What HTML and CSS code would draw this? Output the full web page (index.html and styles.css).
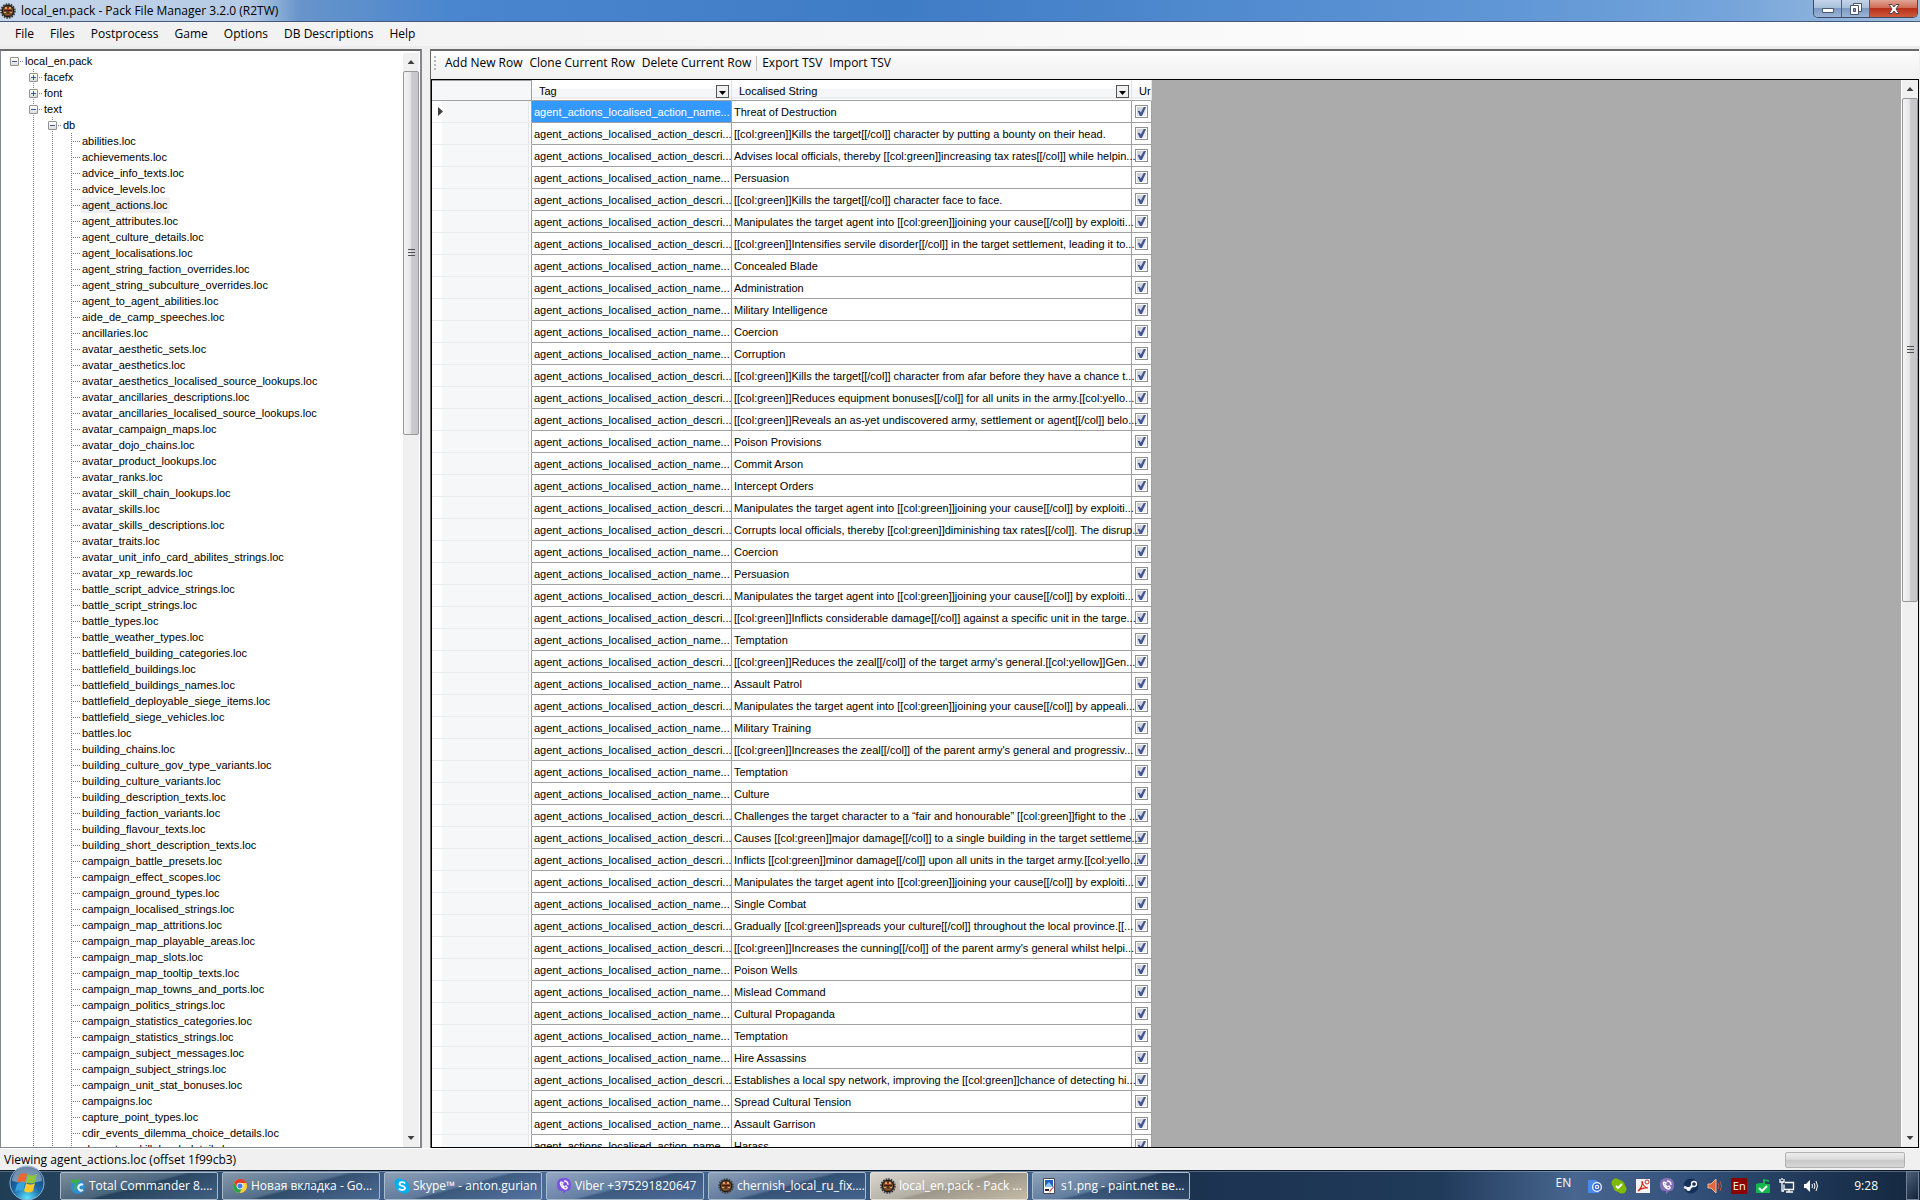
FILE: index.html
```html
<!DOCTYPE html>
<html lang="en">
<head>
<meta charset="utf-8">
<title>local_en.pack - Pack File Manager 3.2.0 (R2TW)</title>
<link rel="stylesheet" href="styles.css">
</head>
<body>
<svg class="defs" aria-hidden="true">
  <symbol id="beetle" viewBox="0 0 16 16">
    <circle cx="8" cy="8" r="6.500" fill="#5a4632" stroke="#3b3f45" stroke-width="2.500" stroke-dasharray="1.600 .900"/>
    <circle cx="8" cy="8" r="5.600" fill="#7d4f2a" stroke="#1e1712"/>
    <path d="M5 4h2v2H5zM9 4h2v2H9zM4 9h2v1H4zM10 9h2v1h-2zM7 11h2v1H7z" fill="#d8a468"/>
    <path d="M8 3v10M4 7.500h8" stroke="#3a1c10"/>
    <path d="M7 5h2v2H7z" fill="#c2301c"/>
  </symbol>
  <symbol id="viber" viewBox="0 0 16 16">
    <path d="M8 0c5 0 7 2 7 7s-2 6-5 6l-3 3v-3c-4 0-6-1-6-6s2-7 7-7z" fill="currentColor"/>
    <path d="M5 4c-2 1 1 7 5 7 2-1 1-2 0-3L8 9 6 6l1-1-2-1zM8 3c3 0 4 2 4 4" fill="none" stroke="#fff" stroke-width="1.3"/>
  </symbol>
</svg>

<header class="titlebar">
  <svg class="icon16"><use href="#beetle"/></svg>
  <h1>local_en.pack - Pack File Manager 3.2.0 (R2TW)</h1>
  <div class="window-buttons">
    <button class="win-min" aria-label="Minimize"><svg width="14" height="12" viewBox="0 0 14 12"><path d="M1.500 5.500h11v4h-11z" fill="#fff" stroke="#4a5568"/></svg></button>
    <button class="win-max" aria-label="Restore"><svg width="14" height="12" viewBox="0 0 14 12"><path d="M4.500.500h8v8h-8z" fill="#fff" stroke="#4a5568"/><path d="M1.500 2.500h8v9h-8z" fill="#fff" stroke="#4a5568"/><path d="M4.500 5.500h2v3h-2z" fill="#8a9fc0" stroke="#4a5568"/></svg></button>
    <button class="win-close" aria-label="Close"><svg width="14" height="12" viewBox="0 0 14 12"><path d="M2 1.500h3L7 4l2-2.500h3L9 6l3 4.500H9L7 8l-2 2.500H2L5 6z" fill="#fff" stroke="#5a4048"/></svg></button>
  </div>
</header>

<nav class="menubar">
  <button>File</button><button>Files</button><button>Postprocess</button><button>Game</button><button>Options</button><button>DB Descriptions</button><button>Help</button>
</nav>

<main class="workspace">
  <section class="tree-pane">
    <div class="tree">
      <ul>
        <li><div class="node"><button class="twist" aria-label="Collapse"></button><a href="#">local_en.pack</a></div>
          <ul>
            <li><div class="node"><button class="twist closed" aria-label="Expand"></button><a href="#">facefx</a></div></li>
            <li><div class="node"><button class="twist closed" aria-label="Expand"></button><a href="#">font</a></div></li>
            <li><div class="node"><button class="twist" aria-label="Collapse"></button><a href="#">text</a></div>
              <ul>
                <li><div class="node"><button class="twist" aria-label="Collapse"></button><a href="#">db</a></div>
                  <ul class="leaves">
                    <li><a href="#">abilities.loc</a></li>
                    <li><a href="#">achievements.loc</a></li>
                    <li><a href="#">advice_info_texts.loc</a></li>
                    <li><a href="#">advice_levels.loc</a></li>
                    <li><a href="#" class="current">agent_actions.loc</a></li>
                    <li><a href="#">agent_attributes.loc</a></li>
                    <li><a href="#">agent_culture_details.loc</a></li>
                    <li><a href="#">agent_localisations.loc</a></li>
                    <li><a href="#">agent_string_faction_overrides.loc</a></li>
                    <li><a href="#">agent_string_subculture_overrides.loc</a></li>
                    <li><a href="#">agent_to_agent_abilities.loc</a></li>
                    <li><a href="#">aide_de_camp_speeches.loc</a></li>
                    <li><a href="#">ancillaries.loc</a></li>
                    <li><a href="#">avatar_aesthetic_sets.loc</a></li>
                    <li><a href="#">avatar_aesthetics.loc</a></li>
                    <li><a href="#">avatar_aesthetics_localised_source_lookups.loc</a></li>
                    <li><a href="#">avatar_ancillaries_descriptions.loc</a></li>
                    <li><a href="#">avatar_ancillaries_localised_source_lookups.loc</a></li>
                    <li><a href="#">avatar_campaign_maps.loc</a></li>
                    <li><a href="#">avatar_dojo_chains.loc</a></li>
                    <li><a href="#">avatar_product_lookups.loc</a></li>
                    <li><a href="#">avatar_ranks.loc</a></li>
                    <li><a href="#">avatar_skill_chain_lookups.loc</a></li>
                    <li><a href="#">avatar_skills.loc</a></li>
                    <li><a href="#">avatar_skills_descriptions.loc</a></li>
                    <li><a href="#">avatar_traits.loc</a></li>
                    <li><a href="#">avatar_unit_info_card_abilites_strings.loc</a></li>
                    <li><a href="#">avatar_xp_rewards.loc</a></li>
                    <li><a href="#">battle_script_advice_strings.loc</a></li>
                    <li><a href="#">battle_script_strings.loc</a></li>
                    <li><a href="#">battle_types.loc</a></li>
                    <li><a href="#">battle_weather_types.loc</a></li>
                    <li><a href="#">battlefield_building_categories.loc</a></li>
                    <li><a href="#">battlefield_buildings.loc</a></li>
                    <li><a href="#">battlefield_buildings_names.loc</a></li>
                    <li><a href="#">battlefield_deployable_siege_items.loc</a></li>
                    <li><a href="#">battlefield_siege_vehicles.loc</a></li>
                    <li><a href="#">battles.loc</a></li>
                    <li><a href="#">building_chains.loc</a></li>
                    <li><a href="#">building_culture_gov_type_variants.loc</a></li>
                    <li><a href="#">building_culture_variants.loc</a></li>
                    <li><a href="#">building_description_texts.loc</a></li>
                    <li><a href="#">building_faction_variants.loc</a></li>
                    <li><a href="#">building_flavour_texts.loc</a></li>
                    <li><a href="#">building_short_description_texts.loc</a></li>
                    <li><a href="#">campaign_battle_presets.loc</a></li>
                    <li><a href="#">campaign_effect_scopes.loc</a></li>
                    <li><a href="#">campaign_ground_types.loc</a></li>
                    <li><a href="#">campaign_localised_strings.loc</a></li>
                    <li><a href="#">campaign_map_attritions.loc</a></li>
                    <li><a href="#">campaign_map_playable_areas.loc</a></li>
                    <li><a href="#">campaign_map_slots.loc</a></li>
                    <li><a href="#">campaign_map_tooltip_texts.loc</a></li>
                    <li><a href="#">campaign_map_towns_and_ports.loc</a></li>
                    <li><a href="#">campaign_politics_strings.loc</a></li>
                    <li><a href="#">campaign_statistics_categories.loc</a></li>
                    <li><a href="#">campaign_statistics_strings.loc</a></li>
                    <li><a href="#">campaign_subject_messages.loc</a></li>
                    <li><a href="#">campaign_subject_strings.loc</a></li>
                    <li><a href="#">campaign_unit_stat_bonuses.loc</a></li>
                    <li><a href="#">campaigns.loc</a></li>
                    <li><a href="#">capture_point_types.loc</a></li>
                    <li><a href="#">cdir_events_dilemma_choice_details.loc</a></li>
                    <li><a href="#">character_skill_level_details.loc</a></li>
                  </ul>
                </li>
              </ul>
            </li>
          </ul>
        </li>
      </ul>
    </div>
    <div class="scrollbar tree-scroll">
      <button class="up" aria-label="Scroll up"></button><div class="thumb"></div><div class="track"></div><button class="down" aria-label="Scroll down"></button>
    </div>
  </section>

  <section class="editor">
    <div class="toolbar">
      <span class="grip"></span>
      <button>Add New Row</button><button>Clone Current Row</button><button>Delete Current Row</button>
      <span class="separator"></span>
      <button>Export TSV</button><button>Import TSV</button>
    </div>
    <div class="grid-frame">
      <div class="grid-view">
        <table>
          <colgroup><col class="c-head"><col class="c-tag"><col class="c-string"><col class="c-check"></colgroup>
          <thead>
            <tr><td></td>
              <th scope="col"><div class="col-head"><span>Tag</span><button class="filter" aria-label="Filter Tag"></button></div></th>
              <th scope="col"><div class="col-head"><span>Localised String</span><button class="filter" aria-label="Filter Localised String"></button></div></th>
              <th scope="col"><div class="col-head"><span>Ur</span></div></th></tr>
          </thead>
          <tbody>
            <tr><th scope="row"><span class="row-arrow"></span></th><td class="selected">agent_actions_localised_action_name...</td><td>Threat of Destruction</td><td><input type="checkbox" aria-label="Ur" checked></td></tr>
            <tr><th scope="row"></th><td>agent_actions_localised_action_descri...</td><td>[[col:green]]Kills the target[[/col]] character by putting a bounty on their head.</td><td><input type="checkbox" aria-label="Ur" checked></td></tr>
            <tr><th scope="row"></th><td>agent_actions_localised_action_descri...</td><td>Advises local officials, thereby [[col:green]]increasing tax rates[[/col]] while helpin...</td><td><input type="checkbox" aria-label="Ur" checked></td></tr>
            <tr><th scope="row"></th><td>agent_actions_localised_action_name...</td><td>Persuasion</td><td><input type="checkbox" aria-label="Ur" checked></td></tr>
            <tr><th scope="row"></th><td>agent_actions_localised_action_descri...</td><td>[[col:green]]Kills the target[[/col]] character face to face.</td><td><input type="checkbox" aria-label="Ur" checked></td></tr>
            <tr><th scope="row"></th><td>agent_actions_localised_action_descri...</td><td>Manipulates the target agent into [[col:green]]joining your cause[[/col]] by exploiti...</td><td><input type="checkbox" aria-label="Ur" checked></td></tr>
            <tr><th scope="row"></th><td>agent_actions_localised_action_descri...</td><td>[[col:green]]Intensifies servile disorder[[/col]] in the target settlement, leading it to...</td><td><input type="checkbox" aria-label="Ur" checked></td></tr>
            <tr><th scope="row"></th><td>agent_actions_localised_action_name...</td><td>Concealed Blade</td><td><input type="checkbox" aria-label="Ur" checked></td></tr>
            <tr><th scope="row"></th><td>agent_actions_localised_action_name...</td><td>Administration</td><td><input type="checkbox" aria-label="Ur" checked></td></tr>
            <tr><th scope="row"></th><td>agent_actions_localised_action_name...</td><td>Military Intelligence</td><td><input type="checkbox" aria-label="Ur" checked></td></tr>
            <tr><th scope="row"></th><td>agent_actions_localised_action_name...</td><td>Coercion</td><td><input type="checkbox" aria-label="Ur" checked></td></tr>
            <tr><th scope="row"></th><td>agent_actions_localised_action_name...</td><td>Corruption</td><td><input type="checkbox" aria-label="Ur" checked></td></tr>
            <tr><th scope="row"></th><td>agent_actions_localised_action_descri...</td><td>[[col:green]]Kills the target[[/col]] character from afar before they have a chance t...</td><td><input type="checkbox" aria-label="Ur" checked></td></tr>
            <tr><th scope="row"></th><td>agent_actions_localised_action_descri...</td><td>[[col:green]]Reduces equipment bonuses[[/col]] for all units in the army.[[col:yello...</td><td><input type="checkbox" aria-label="Ur" checked></td></tr>
            <tr><th scope="row"></th><td>agent_actions_localised_action_descri...</td><td>[[col:green]]Reveals an as-yet undiscovered army, settlement or agent[[/col]] belo...</td><td><input type="checkbox" aria-label="Ur" checked></td></tr>
            <tr><th scope="row"></th><td>agent_actions_localised_action_name...</td><td>Poison Provisions</td><td><input type="checkbox" aria-label="Ur" checked></td></tr>
            <tr><th scope="row"></th><td>agent_actions_localised_action_name...</td><td>Commit Arson</td><td><input type="checkbox" aria-label="Ur" checked></td></tr>
            <tr><th scope="row"></th><td>agent_actions_localised_action_name...</td><td>Intercept Orders</td><td><input type="checkbox" aria-label="Ur" checked></td></tr>
            <tr><th scope="row"></th><td>agent_actions_localised_action_descri...</td><td>Manipulates the target agent into [[col:green]]joining your cause[[/col]] by exploiti...</td><td><input type="checkbox" aria-label="Ur" checked></td></tr>
            <tr><th scope="row"></th><td>agent_actions_localised_action_descri...</td><td>Corrupts local officials, thereby [[col:green]]diminishing tax rates[[/col]]. The disrup...</td><td><input type="checkbox" aria-label="Ur" checked></td></tr>
            <tr><th scope="row"></th><td>agent_actions_localised_action_name...</td><td>Coercion</td><td><input type="checkbox" aria-label="Ur" checked></td></tr>
            <tr><th scope="row"></th><td>agent_actions_localised_action_name...</td><td>Persuasion</td><td><input type="checkbox" aria-label="Ur" checked></td></tr>
            <tr><th scope="row"></th><td>agent_actions_localised_action_descri...</td><td>Manipulates the target agent into [[col:green]]joining your cause[[/col]] by exploiti...</td><td><input type="checkbox" aria-label="Ur" checked></td></tr>
            <tr><th scope="row"></th><td>agent_actions_localised_action_descri...</td><td>[[col:green]]Inflicts considerable damage[[/col]] against a specific unit in the targe...</td><td><input type="checkbox" aria-label="Ur" checked></td></tr>
            <tr><th scope="row"></th><td>agent_actions_localised_action_name...</td><td>Temptation</td><td><input type="checkbox" aria-label="Ur" checked></td></tr>
            <tr><th scope="row"></th><td>agent_actions_localised_action_descri...</td><td>[[col:green]]Reduces the zeal[[/col]] of the target army's general.[[col:yellow]]Gen...</td><td><input type="checkbox" aria-label="Ur" checked></td></tr>
            <tr><th scope="row"></th><td>agent_actions_localised_action_name...</td><td>Assault Patrol</td><td><input type="checkbox" aria-label="Ur" checked></td></tr>
            <tr><th scope="row"></th><td>agent_actions_localised_action_descri...</td><td>Manipulates the target agent into [[col:green]]joining your cause[[/col]] by appeali...</td><td><input type="checkbox" aria-label="Ur" checked></td></tr>
            <tr><th scope="row"></th><td>agent_actions_localised_action_name...</td><td>Military Training</td><td><input type="checkbox" aria-label="Ur" checked></td></tr>
            <tr><th scope="row"></th><td>agent_actions_localised_action_descri...</td><td>[[col:green]]Increases the zeal[[/col]] of the parent army's general and progressiv...</td><td><input type="checkbox" aria-label="Ur" checked></td></tr>
            <tr><th scope="row"></th><td>agent_actions_localised_action_name...</td><td>Temptation</td><td><input type="checkbox" aria-label="Ur" checked></td></tr>
            <tr><th scope="row"></th><td>agent_actions_localised_action_name...</td><td>Culture</td><td><input type="checkbox" aria-label="Ur" checked></td></tr>
            <tr><th scope="row"></th><td>agent_actions_localised_action_descri...</td><td>Challenges the target character to a “fair and honourable” [[col:green]]fight to the ...</td><td><input type="checkbox" aria-label="Ur" checked></td></tr>
            <tr><th scope="row"></th><td>agent_actions_localised_action_descri...</td><td>Causes [[col:green]]major damage[[/col]] to a single building in the target settleme...</td><td><input type="checkbox" aria-label="Ur" checked></td></tr>
            <tr><th scope="row"></th><td>agent_actions_localised_action_descri...</td><td>Inflicts [[col:green]]minor damage[[/col]] upon all units in the target army.[[col:yello...</td><td><input type="checkbox" aria-label="Ur" checked></td></tr>
            <tr><th scope="row"></th><td>agent_actions_localised_action_descri...</td><td>Manipulates the target agent into [[col:green]]joining your cause[[/col]] by exploiti...</td><td><input type="checkbox" aria-label="Ur" checked></td></tr>
            <tr><th scope="row"></th><td>agent_actions_localised_action_name...</td><td>Single Combat</td><td><input type="checkbox" aria-label="Ur" checked></td></tr>
            <tr><th scope="row"></th><td>agent_actions_localised_action_descri...</td><td>Gradually [[col:green]]spreads your culture[[/col]] throughout the local province.[[...</td><td><input type="checkbox" aria-label="Ur" checked></td></tr>
            <tr><th scope="row"></th><td>agent_actions_localised_action_descri...</td><td>[[col:green]]Increases the cunning[[/col]] of the parent army's general whilst helpi...</td><td><input type="checkbox" aria-label="Ur" checked></td></tr>
            <tr><th scope="row"></th><td>agent_actions_localised_action_name...</td><td>Poison Wells</td><td><input type="checkbox" aria-label="Ur" checked></td></tr>
            <tr><th scope="row"></th><td>agent_actions_localised_action_name...</td><td>Mislead Command</td><td><input type="checkbox" aria-label="Ur" checked></td></tr>
            <tr><th scope="row"></th><td>agent_actions_localised_action_name...</td><td>Cultural Propaganda</td><td><input type="checkbox" aria-label="Ur" checked></td></tr>
            <tr><th scope="row"></th><td>agent_actions_localised_action_name...</td><td>Temptation</td><td><input type="checkbox" aria-label="Ur" checked></td></tr>
            <tr><th scope="row"></th><td>agent_actions_localised_action_name...</td><td>Hire Assassins</td><td><input type="checkbox" aria-label="Ur" checked></td></tr>
            <tr><th scope="row"></th><td>agent_actions_localised_action_descri...</td><td>Establishes a local spy network, improving the [[col:green]]chance of detecting hi...</td><td><input type="checkbox" aria-label="Ur" checked></td></tr>
            <tr><th scope="row"></th><td>agent_actions_localised_action_name...</td><td>Spread Cultural Tension</td><td><input type="checkbox" aria-label="Ur" checked></td></tr>
            <tr><th scope="row"></th><td>agent_actions_localised_action_name...</td><td>Assault Garrison</td><td><input type="checkbox" aria-label="Ur" checked></td></tr>
            <tr><th scope="row"></th><td>agent_actions_localised_action_name...</td><td>Harass</td><td><input type="checkbox" aria-label="Ur" checked></td></tr>
          </tbody>
        </table>
      </div>
      <div class="scrollbar grid-scroll">
        <button class="up" aria-label="Scroll up"></button><div class="thumb"></div><div class="track"></div><button class="down" aria-label="Scroll down"></button>
      </div>
    </div>
  </section>
</main>

<div class="statusbar">
  <span>Viewing agent_actions.loc (offset 1f99cb3)</span>
  <progress value="0" max="100" aria-label="Progress"></progress>
</div>

<footer class="taskbar">
  <button class="start" aria-label="Start">
    <svg width="36" height="36" viewBox="0 0 36 36">
      <defs><radialGradient id="orb" cx=".5" cy=".95" r=".9"><stop offset="0" stop-color="#5fe4ff"/><stop offset=".45" stop-color="#1b6cab"/><stop offset="1" stop-color="#123a66"/></radialGradient></defs>
      <circle cx="18" cy="18" r="17" fill="url(#orb)" stroke="#8db7d8"/>
      <path d="M3 16A15 15 0 0 1 33 16Q18 20 3 16z" fill="#fff" opacity=".4"/>
      <path d="M10 10q4-3 8-1l-2 8q-4-2-8 1z" fill="#f0652a"/>
      <path d="M19 9q4 3 9 0l-2 8q-4 3-9 0z" fill="#8cc63f"/>
      <path d="M8 19q4-3 8-1l-2 8q-4-2-8 1z" fill="#36a3e0"/>
      <path d="M17 18q4 3 9 0l-2 8q-4 3-9 0z" fill="#fcc92c"/>
    </svg>
  </button>
  <div class="tasks">
    <button><svg class="icon16" viewBox="0 0 16 16"><circle cx="8" cy="9" r="7" fill="#2c8fd6"/><path d="M1 2l9-1v3L7 5l-1 7H4l1-7H1z" fill="#3fae49"/><path d="M13 7a3 3 0 1 0 0 5" fill="none" stroke="#e8f6ff" stroke-width="2"/></svg><span>Total Commander 8....</span></button>
    <button><svg class="icon16" viewBox="0 0 16 16"><circle cx="8" cy="8" r="7" fill="#fdd13a"/><path d="M2 4.500A7 7 0 0 1 14.500 5H8a3 3 0 0 0-3 4z" fill="#e33b2e"/><path d="M2 4.500A7 7 0 0 0 7.500 15L10.500 10A3 3 0 0 1 5 9z" fill="#28a04a"/><circle cx="8" cy="8" r="3.300" fill="#fff"/><circle cx="8" cy="8" r="2.500" fill="#3f7ee8"/></svg><span>Новая вкладка - Go...</span></button>
    <button><svg class="icon16" viewBox="0 0 16 16"><circle cx="5" cy="5" r="4.500" fill="#00aff0"/><circle cx="11" cy="11" r="4.500" fill="#00aff0"/><circle cx="8" cy="8" r="6.500" fill="#00aff0"/><path d="M11 5.500C10 3.500 5.500 3.500 5.500 6S11 7.500 11 10s-5 2.500-6 .500" fill="none" stroke="#fff" stroke-width="1.800"/></svg><span>Skype™ - anton.gurian</span></button>
    <button><svg class="icon16 viber"><use href="#viber"/></svg><span>Viber +375291820647</span></button>
    <button><svg class="icon16"><use href="#beetle"/></svg><span>chernish_local_ru_fix....</span></button>
    <button class="active"><svg class="icon16"><use href="#beetle"/></svg><span>local_en.pack - Pack ...</span></button>
    <button><svg class="icon16" viewBox="0 0 16 16"><path d="M1.500.500h11v15h-11z" fill="#fff" stroke="#445"/><path d="M3 2h8v7H3z" fill="#1f5fc4"/><path d="M4 7l3-3 4 5H3z" fill="#8cc0f5"/><path d="M15 5l-7 9-1 1 1-3z" fill="#c33"/><path d="M3 12h4" stroke="#223" stroke-width="2"/></svg><span>s1.png - paint.net ве...</span></button>
  </div>
  <div class="tray">
    <span class="lang">EN</span>
    <svg class="icon16" viewBox="0 0 16 16"><path d="M1 2h8l3 3v10H1z" fill="#4a8af0"/><circle cx="10" cy="9" r="5" fill="#fff"/><circle cx="10" cy="9" r="3" fill="none" stroke="#2b66d0" stroke-width="1.500"/><circle cx="10" cy="9" r="1" fill="#2b66d0"/></svg>
    <svg class="icon16" viewBox="0 0 16 16"><circle cx="5" cy="5" r="4.500" fill="#7fba00"/><circle cx="11" cy="11" r="4.500" fill="#7fba00"/><circle cx="8" cy="8" r="6" fill="#7fba00"/><path d="M5 8l2 2 4-4" fill="none" stroke="#fff" stroke-width="1.800"/></svg>
    <svg class="icon16" viewBox="0 0 16 16"><path d="M1 1h14v14H1z" fill="#f4f4f4"/><path d="M3 13q5-4 4-10 1 6 6 7-6-1-10 3z" fill="none" stroke="#d22" stroke-width="1.200"/><circle cx="12" cy="4" r="2" fill="none" stroke="#b33"/></svg>
    <svg class="icon16 viber-tray"><use href="#viber"/></svg>
    <svg class="icon16" viewBox="0 0 16 16"><circle cx="8" cy="8" r="7.500" fill="#14305c"/><path d="M1 9l5 2 4-4" fill="none" stroke="#dfe8f4" stroke-width="2.500"/><circle cx="11" cy="6" r="2.500" fill="#14305c" stroke="#fff" stroke-width="1.300"/><circle cx="5.500" cy="11" r="2" fill="#fff"/></svg>
    <svg class="icon16" viewBox="0 0 16 16"><path d="M1 6h3l5-5v14l-5-5H1z" fill="#e2683c" stroke="#f4b79a"/><path d="M11 5q2 3 0 6M13 3q3 5 0 10" fill="none" stroke="#b85a40"/></svg>
    <span class="lang-badge">En</span>
    <svg class="icon16" viewBox="0 0 16 16"><path d="M1 6l4-1h3V1l6 1v2l-4-1v3h5v9H1z" fill="#12b84c"/><path d="M4 10l3 3 5-5" fill="none" stroke="#fff" stroke-width="2"/></svg>
    <svg class="icon16" viewBox="0 0 16 16" fill="none" stroke="#fff" stroke-width="1.300"><path d="M6 4.500h8.500v7H5v-5M7 14h7M10 12v2M1 1v3h4V1M3 4v9h2M3 0v2"/></svg>
    <svg class="icon16" viewBox="0 0 16 16"><path d="M1 6h2l4-4v12l-4-4H1z" fill="#fff"/><path d="M9 6q1 2 0 4M11 5q2 3 0 6M13 3q3 5 0 10" fill="none" stroke="#fff"/></svg>
    <time>9:28</time>
  </div>
  <button class="show-desktop" aria-label="Show desktop"></button>
</footer>
</body>
</html>
```
FILE: styles.css
```css
* { box-sizing: border-box; }

:root {
  --ui: "Open Sans", "Noto Sans", sans-serif;
  --data: "Liberation Sans", Arial, sans-serif;
  --line: #a0a0a0;
}

html { height: 100%; }

body {
  margin: 0;
  height: 100vh;
  display: flex;
  flex-direction: column;
  overflow: hidden;
  background: #f0f0f0;
  color: #000;
  font: 11px/16px var(--ui);
}

button {
  margin: 0;
  padding: 0;
  border: 0;
  background: none;
  color: inherit;
  font: inherit;
}

ul { margin: 0; padding: 0; list-style: none; }
a { color: inherit; text-decoration: none; }
.defs { display: none; }
.icon16 { width: 16px; height: 16px; flex: none; }

/* Title bar */
.titlebar {
  height: 22px;
  flex: none;
  display: flex;
  align-items: center;
  gap: 5px;
  padding-right: 2px;
  border-bottom: 1px solid #45587a;
  background:
    linear-gradient(to right, rgba(214, 226, 240, .85) 0, rgba(205, 220, 238, .75) 250px, transparent 300px),
    linear-gradient(to right, #7099cb 0, #6794ca 300px, #4a86cf 450px, #3f7cc6 900px, #5f96d6 1500px, #74a4da 90%, #a3bfdf 100%);
}
.titlebar h1 { margin: 0; flex: 1; font: 12px/16px var(--ui); }
.window-buttons {
  align-self: flex-start;
  display: flex;
  height: 18px;
  border: 1px solid #3c4a63;
  border-top: 0;
  border-radius: 0 0 5px 5px;
  overflow: hidden;
}
.window-buttons button {
  width: 28px;
  display: flex;
  align-items: center;
  justify-content: center;
  border-right: 1px solid #4c5f80;
  background: linear-gradient(#c3d3e8 0, #a9bfdc 45%, #7d9ac3 50%, #9ab4d6 100%);
}
.window-buttons .win-close {
  width: 47px;
  border-right: 0;
  background: linear-gradient(#e0a595 0, #cf6b55 45%, #b8301a 50%, #cf5a3c 100%);
}

/* Menu */
.menubar {
  height: 27px;
  flex: none;
  display: flex;
  align-items: center;
  gap: 16px;
  padding: 0 15px;
  background: linear-gradient(to right, #f0f0f0, #fcfcfc 80%);
  border-bottom: 3px solid #ededed;
}
.menubar button, .toolbar button, .statusbar { font-size: 12px; }

/* Two panes */
.workspace { flex: 1; min-height: 0; display: flex; gap: 8px; padding-right: 1px; }

.tree-pane {
  width: 422px;
  flex: none;
  display: flex;
  border: 1px solid #828790;
  border-top: 2px solid #6b6b6b;
  border-right-width: 2px;
  background: #fff;
  padding: 2px 1px 0 0;
}
.tree {
  flex: 1;
  min-width: 0;
  overflow: hidden;
  padding-left: 9px;
  font: 11px/16px var(--data);
  white-space: nowrap;
}
.tree ul ul {
  padding-left: 19px;
  background: repeating-linear-gradient(#808080 0 1px, transparent 1px 2px) 23px 0 / 1px 100% no-repeat;
}
.node { display: flex; align-items: center; height: 16px; }
.node::before {
  content: "";
  order: 1;
  width: 4px;
  height: 1px;
  margin-right: 1px;
  background: repeating-linear-gradient(to right, transparent 0 1px, #808080 1px 2px);
}
.node a { order: 2; padding: 0 1px; }
.twist {
  width: 9px;
  height: 9px;
  border: 1px solid #919191;
  border-radius: 1px;
  background:
    linear-gradient(#3c5a9a, #3c5a9a) center / 5px 1px no-repeat,
    linear-gradient(#fff, #dcdcdc);
}
.twist.closed {
  background:
    linear-gradient(#3c5a9a, #3c5a9a) center / 5px 1px no-repeat,
    linear-gradient(#3c5a9a, #3c5a9a) center / 1px 5px no-repeat,
    linear-gradient(#fff, #dcdcdc);
}
.leaves li {
  height: 16px;
  padding-left: 14px;
  background: repeating-linear-gradient(to right, #808080 0 1px, transparent 1px 2px) 4px 8px / 9px 1px no-repeat;
}
.leaves a { display: inline-block; height: 16px; padding: 0 2px 0 1px; }
.leaves .current { background: #f0f0f0; }

/* Scroll bars */
.scrollbar {
  width: 16px;
  flex: none;
  display: flex;
  flex-direction: column;
  background: #f0f0f0;
}
.scrollbar button { height: 18px; flex: none; display: grid; place-items: center; }
.scrollbar button::before { content: ""; width: 7px; height: 4px; background: #404040; }
.scrollbar .up::before { clip-path: polygon(50% 0, 100% 100%, 0 100%); }
.scrollbar .down::before { clip-path: polygon(0 0, 100% 0, 50% 100%); }
.thumb {
  border: 1px solid #989898;
  border-radius: 2px;
  background:
    repeating-linear-gradient(#505050 0 1px, transparent 1px 3px) center / 7px 8px no-repeat,
    linear-gradient(to right, #f4f4f4, #e6e6e9 45%, #cacace 55%, #c6c6ca);
}
.tree-scroll .thumb { flex: 343 0 0; }
.tree-scroll .track { flex: 657 0 0; }
.grid-scroll .thumb { flex: 488 0 0; }
.grid-scroll .track { flex: 512 0 0; }

/* Editor */
.editor {
  flex: 1;
  min-width: 0;
  display: flex;
  flex-direction: column;
  border: solid #696969;
  border-width: 2px 0 0 1px;
}
.toolbar {
  height: 28px;
  flex: none;
  display: flex;
  align-items: center;
  gap: 7px;
  padding: 0 3px 4px;
  background: linear-gradient(#fdfdfd, #f0f0f0);
}
.grip {
  width: 2px;
  height: 15px;
  margin-right: 2px;
  background: repeating-linear-gradient(#b8b8b8 0 2px, transparent 2px 4px);
}
.separator { width: 1px; height: 15px; margin: 0 -2px; background: #bdbdbd; }

.grid-frame {
  flex: 1;
  min-height: 0;
  display: flex;
  border: 1px solid #000;
  background: #ababab;
}
.grid-view { flex: 1; min-width: 0; overflow: hidden; }
.grid-scroll { border-left: 1px solid #fff; width: 17px; }

table {
  width: 720px;
  table-layout: fixed;
  border-collapse: separate;
  border-spacing: 0;
  background: #fff;
  font: 11px/14px var(--data);
}
.c-head { width: 100px; }
.c-tag { width: 200px; }
.c-string { width: 400px; }
.c-check { width: 20px; }
th, td {
  height: 22px;
  padding: 0 0 0 2px;
  white-space: nowrap;
  text-align: left;
  font-weight: normal;
  vertical-align: middle;
  border: solid var(--line);
  border-width: 0 1px 1px 0;
}
thead th, thead td {
  height: 21px;
  padding: 2px 0 0;
  background: linear-gradient(#fff 0 40%, #f5f6f8 45% 85%, #dfe1e4 90%, #fff 95%);
}
thead th { border-right-color: #e2e3e6; }
thead td { background: #f6f7f9; border-top: 1px solid var(--line); }
.col-head { display: flex; align-items: center; justify-content: space-between; padding: 0 2px 0 7px; }
thead th:last-child .col-head { padding-right: 0; }
.filter {
  width: 13px;
  height: 13px;
  border: 1px solid #555;
  background: #f0f0f0;
  display: grid;
  place-items: center;
}
.filter::before { content: ""; width: 7px; height: 4px; margin-top: 4px; background: #000; clip-path: polygon(0 0, 100% 0, 50% 100%); }
tbody th {
  padding-left: 6px;
  border-bottom-color: #ececee;
  background: linear-gradient(to right, #fff 10px, #f6f7f9 10px 96px, #e4e5e8 96px 97px, #fff 97px);
}
.row-arrow { display: block; width: 5px; height: 9px; background: #404040; clip-path: polygon(0 0, 100% 50%, 0 100%); }
.selected { background: #3399ff; color: #fff; }
td input {
  appearance: none;
  display: block;
  width: 13px;
  height: 13px;
  margin: 0 0 0 1px;
  border: 1px solid #8e8f8f;
  background: linear-gradient(135deg, #c4c8cf, #f6f6f6) content-box, #fff;
  padding: 1px;
}
td input:checked::before {
  content: "";
  display: block;
  width: 9px;
  height: 9px;
  background: #3f5596;
  clip-path: polygon(8% 45%, 28% 42%, 42% 62%, 75% 0, 100% 0, 55% 100%, 32% 100%);
}

/* Status bar */
.statusbar {
  height: 22px;
  flex: none;
  display: flex;
  align-items: center;
  justify-content: space-between;
  padding: 0 15px 0 4px;
  border-top: 1px solid #fff;
  background: #f0f0f0;
}
progress {
  appearance: none;
  width: 120px;
  height: 16px;
  border: 1px solid #b2b2b2;
  border-radius: 2px;
  background: linear-gradient(#ececec 0, #dcdcdc 45%, #c8c8c8 50%, #d6d6d6 100%);
}
progress::-webkit-progress-bar { background: transparent; }

/* Task bar */
.taskbar {
  position: relative;
  height: 30px;
  flex: none;
  display: flex;
  align-items: stretch;
  padding: 0 1px 0 60px;
  border-top: 1px solid #0d1a2c;
  color: #fff;
  background:
    linear-gradient(rgba(255, 255, 255, .25) 0 1px, transparent 1px),
    linear-gradient(to right, #1f3d55 0, #31506e 10%, #4c6b97 28%, #38577f 45%, #46678f 56%, #1c3350 62%, #203a5a 75%, #48668f 82%, #33517a 88%, #1d3553 95%, #14273f 100%);
}
.start { position: absolute; left: 9px; top: -6px; width: 36px; height: 36px; overflow: hidden; }
.start svg { display: block; }
.tasks { flex: 1; min-width: 0; display: flex; gap: 4px; padding-top: 1px; }
.tasks button {
  width: 158px;
  flex: none;
  display: flex;
  align-items: center;
  gap: 3px;
  padding: 0 9px;
  overflow: hidden;
  white-space: nowrap;
  font-size: 12px;
  border: 1px solid #a9bacb;
  border-radius: 2px;
  background: linear-gradient(165deg, rgba(255, 255, 255, .4) 0, rgba(255, 255, 255, .15) 48%, rgba(20, 40, 60, .2) 52%, rgba(120, 150, 200, .2) 100%);
}
.tasks .active { background: linear-gradient(165deg, #d9d5cc, #b5b0a6 48%, #9d978b 52%, #c4bba6); border-color: #e4e0d6; }
.viber { color: #7d51e0; }
.viber-tray { color: #8570b8; }
.tray { display: flex; align-items: center; gap: 8px; padding-right: 28px; }
.tray span, .tray time { font-size: 12px; }
.tray .lang { margin: -6px 8px 0 0; }
.tray .lang-badge { width: 16px; height: 16px; background: #8b0000; text-align: center; font-size: 11px; }
.tray time { margin-left: 27px; }
.show-desktop { width: 13px; border: 1px solid #6d8096; background: linear-gradient(135deg, #4c6078, #14233a); }
```
